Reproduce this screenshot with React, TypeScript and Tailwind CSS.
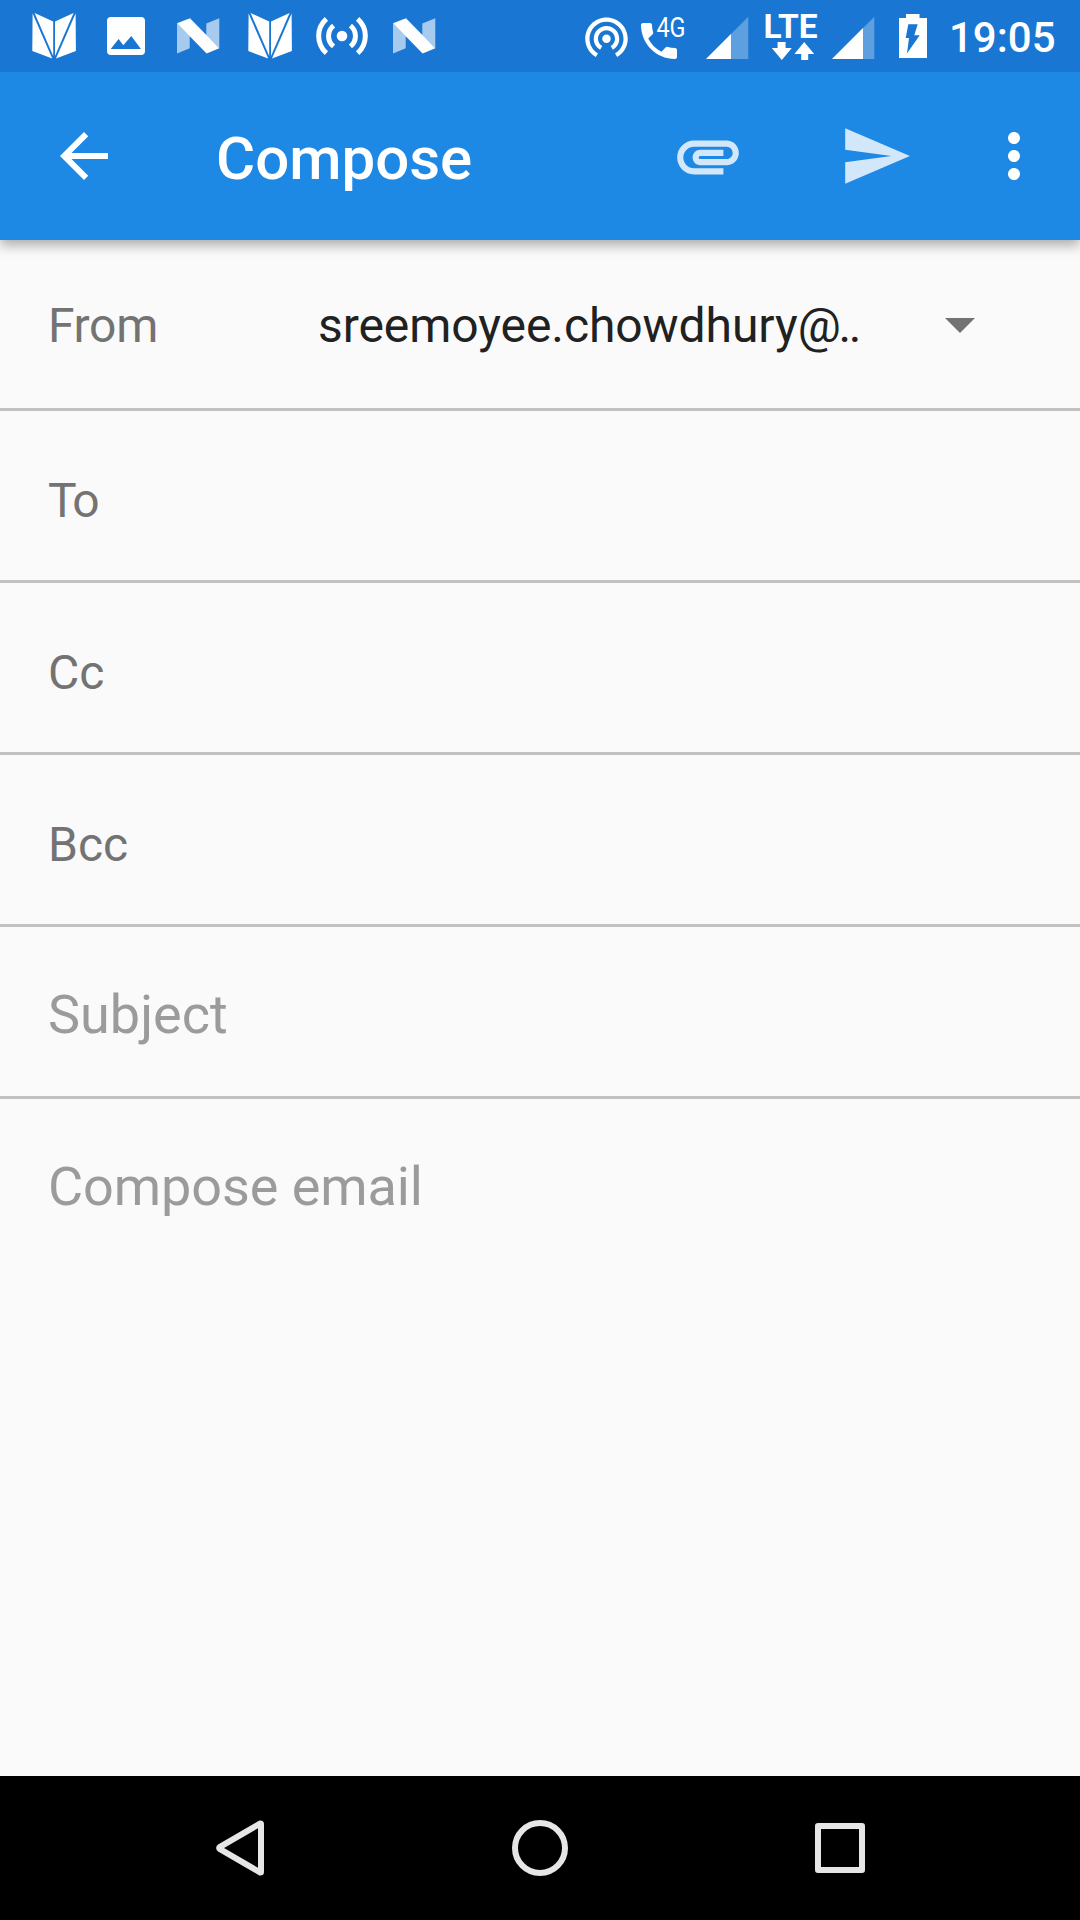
import type { ReactNode } from 'react';

function BookIcon() {
  return (
    <svg className="w-[72px] h-[72px]" viewBox="0 0 72 72" fill="white">
      <path d="M14.6 13.6 34.2 58.6 14.3 51z" />
      <path d="M16.6 13 35.2 21.4V56z" />
      <path d="M57.6 13.6 38 58.6 57.9 51z" />
      <path d="M55.6 13 37 21.4V56z" />
    </svg>
  );
}

function PictureIcon() {
  return (
    <svg className="w-[72px] h-[72px]" viewBox="0 0 72 72">
      <rect x="17" y="17" width="38" height="38" rx="4" fill="white" />
      <path d="M20.7 49 28.6 39 33.3 45.3 41.3 36 50.9 49z" fill="#1976d2" />
    </svg>
  );
}

function NougatIcon() {
  return (
    <svg className="w-[72px] h-[72px]" viewBox="0 0 72 72" fill="white">
      <path d="M15 23.3 27.7 36V48.3L15 53.5zM44.3 23.6 57.3 18.2V48.3L44.3 35.5z" opacity=".62" />
      <path d="M15 23.3 28 18.2 57.3 48.3 44.6 53.5z" />
    </svg>
  );
}

function BroadcastIcon() {
  return (
    <svg className="w-[72px] h-[72px]" viewBox="0 0 72 72" fill="none" stroke="white" strokeWidth="5">
      <circle cx="36" cy="36" r="5.3" fill="white" stroke="none" />
      <path d="M27.6 25.6a13.2 13.2 0 0 0 0 20.8M44.4 25.6a13.2 13.2 0 0 1 0 20.8" />
      <path d="M20.4 18.8a23 23 0 0 0 0 34.4M51.6 18.8a23 23 0 0 1 0 34.4" />
    </svg>
  );
}

function HotspotIcon() {
  return (
    <svg className="w-[51px] h-[51px] shrink-0" viewBox="0 0 24 24" fill="white">
      <path d="M12 11c-1.1 0-2 .9-2 2s.9 2 2 2 2-.9 2-2-.9-2-2-2zm6 2c0-3.31-2.69-6-6-6s-6 2.69-6 6c0 2.22 1.21 4.15 3 5.19l1-1.74c-1.19-.7-2-1.97-2-3.45 0-2.21 1.79-4 4-4s4 1.79 4 4c0 1.48-.81 2.75-2 3.45l1 1.74c1.79-1.04 3-2.97 3-5.19zM12 3C6.48 3 2 7.48 2 13c0 3.7 2.01 6.92 4.99 8.65l1-1.73C5.61 18.53 4 15.96 4 13c0-4.42 3.58-8 8-8s8 3.58 8 8c0 2.96-1.61 5.53-4 6.92l1 1.73c2.99-1.73 5-4.95 5-8.65 0-5.52-4.48-10-10-10z" />
    </svg>
  );
}

function Call4GIcon() {
  return (
    <svg className="w-[60px] h-[72px] shrink-0" viewBox="0 0 60 72" fill="white">
      <path
        transform="translate(3 17) scale(2)"
        d="M6.62 10.79c1.44 2.83 3.76 5.14 6.59 6.59l2.2-2.2c.27-.27.67-.36 1.02-.24 1.12.37 2.33.57 3.57.57.55 0 1 .45 1 1V20c0 .55-.45 1-1 1-9.39 0-17-7.61-17-17 0-.55.45-1 1-1h3.5c.55 0 1 .45 1 1 0 1.25.2 2.45.57 3.57.11.35.03.74-.25 1.02l-2.2 2.2z"
      />
      <text transform="translate(24.4 36.7) scale(.82 1)" fontSize="28.5" className="font-[Roboto,sans-serif]">
        4G
      </text>
    </svg>
  );
}

function SignalIcon({ level }: { level: number }) {
  return (
    <svg className="w-[43px] h-[72px]" viewBox="0 0 43 72" fill="white">
      <path d="M0 59 42.3 16.7V59z" opacity=".3" />
      <path d={`M0 59 ${level} ${59 - level}V59z`} />
    </svg>
  );
}

function LteIcon() {
  return (
    <svg className="w-[54px] h-[72px]" viewBox="0 0 54 72" fill="white">
      <text
        x="-1.5"
        y="38"
        fontSize="32.5"
        fontWeight="700"
        textLength="54"
        lengthAdjust="spacingAndGlyphs"
        className="font-[Roboto,sans-serif]"
      >
        LTE
      </text>
      <path d="M12.6 42h8v6h6.2L16.8 60 6.8 48h5.8zM39.2 42l10 12h-6v6h-7v-6h-6.8z" />
    </svg>
  );
}

function BatteryIcon() {
  return (
    <svg className="w-[28px] h-[72px]" viewBox="0 0 28 72">
      <path d="M7 14h13.5v4H28v40H0V18h7z" fill="white" />
      <path d="M9.3 24.3h9.4l-3.4 11h5.4L8 53.5 10 38H6.7z" fill="#1976d2" />
    </svg>
  );
}

function StatusBar() {
  return (
    <div className="relative z-10 flex h-[72px] bg-[#1976d2] items-center justify-between pl-[18px] pr-[24px]">
      <div className="flex">
        <BookIcon />
        <PictureIcon />
        <NougatIcon />
        <BookIcon />
        <BroadcastIcon />
        <NougatIcon />
      </div>
      <div className="flex w-[475px] shrink-0 items-center whitespace-nowrap">
        <HotspotIcon />
        <Call4GIcon />
        <div className="ml-[13.5px] shrink-0"><SignalIcon level={25} /></div>
        <div className="ml-[16px] shrink-0"><LteIcon /></div>
        <div className="ml-[13px] shrink-0"><SignalIcon level={31} /></div>
        <div className="ml-[24.5px] shrink-0"><BatteryIcon /></div>
        <span className="ml-[22px] mt-[3px] text-[42px] leading-[48px] font-medium text-white">19:05</span>
      </div>
    </div>
  );
}

function AppBar() {
  return (
    <header className="relative flex h-[168px] items-center bg-[#1e88e5] shadow-[0_5px_12px_rgba(0,0,0,0.33)]">
      <svg className="ml-[48px] w-[72px] h-[72px]" viewBox="0 0 24 24" fill="white">
        <path d="M20 11H7.83l5.59-5.59L12 4l-8 8 8 8 1.41-1.41L7.83 13H20v-2z" />
      </svg>
      <h1 className="ml-[96px] mt-[6px] w-[455px] text-[60px] leading-[70px] font-medium text-white">Compose</h1>
      <svg className="w-[74px] h-[74px] opacity-80" viewBox="0 0 24 24" fill="white">
        <path d="M2 12.5C2 9.46 4.46 7 7.5 7H18c2.21 0 4 1.79 4 4s-1.79 4-4 4H9.5C8.12 15 7 13.88 7 12.5S8.12 10 9.5 10H17v2H9.41c-.55 0-.55 1 0 1H18c1.1 0 2-.9 2-2s-.9-2-2-2H7.5C5.57 9 4 10.57 4 12.5S5.57 16 7.5 16H17v2H7.5C4.46 18 2 15.54 2 12.5z" />
      </svg>
      <svg className="ml-[94px] w-[74px] h-[74px] opacity-80" viewBox="0 0 24 24" fill="white">
        <path d="M2.01 21L23 12 2.01 3 2 10l15 2-15 2z" />
      </svg>
      <svg className="ml-[65px] w-[72px] h-[72px]" viewBox="0 0 24 24" fill="white">
        <path d="M12 8c1.1 0 2-.9 2-2s-.9-2-2-2-2 .9-2 2 .9 2 2 2zm0 2c-1.1 0-2 .9-2 2s.9 2 2 2 2-.9 2-2-.9-2-2-2zm0 6c-1.1 0-2 .9-2 2s.9 2 2 2 2-.9 2-2-.9-2-2-2z" />
      </svg>
    </header>
  );
}

function Row({ children }: { children: ReactNode }) {
  return (
    <div className="flex h-[172px] items-center border-b-3 border-[#c1c1c1] pl-[48px] pt-[10px] text-[48px] leading-[56px] text-[#737373]">
      {children}
    </div>
  );
}

export default function App() {
  return (
    <div className="flex h-[1920px] w-[1080px] flex-col overflow-hidden bg-[#fafafa] font-[Roboto,sans-serif]">
      <StatusBar />
      <AppBar />
      <main className="flex-1">
        <div className="flex h-[171px] items-center border-b-3 border-[#c1c1c1] pl-[48px] text-[48px] leading-[56px]">
          <span className="mt-[3px] w-[270px] tracking-[-0.3px] text-[#737373]">From</span>
          <span className="mt-[3px] w-[627px] tracking-[-0.07px] text-[#212121]">
            sreemoyee.chowdhury@<span className="-ml-[2.2px] tracking-[-2.3px]">..</span>
          </span>
          <svg className="mt-[3px] h-[15px] w-[30px]" viewBox="0 0 30 15" fill="#737373">
            <path d="M0 0h30L15 15z" />
          </svg>
        </div>
        <Row>
          <span className="tracking-[-2px]">To</span>
        </Row>
        <Row>Cc</Row>
        <Row>Bcc</Row>
        <div className="flex h-[172px] items-center border-b-3 border-[#c1c1c1] pl-[48px] pt-[6px] text-[54px] leading-[64px] text-[#9b9b9b]">
          Subject
        </div>
        <div className="flex h-[169px] items-center pl-[48px] pt-[6px] text-[54px] leading-[64px] tracking-[-0.08px] text-[#9b9b9b]">
          Compose email
        </div>
      </main>
      <nav className="flex h-[144px] items-center justify-center gap-[228px] bg-black">
        <svg className="h-[72px] w-[72px]" viewBox="0 0 72 72" fill="none" stroke="#e6e6e6" strokeWidth="6" strokeLinejoin="round">
          <path d="M56.4 11.4 16 34.8q-1.8 1.2 0 2.4L56.4 60.6q.6 0 .6-.6V12q0-.6-.6-.6z" />
        </svg>
        <svg className="h-[72px] w-[72px]" viewBox="0 0 72 72" fill="none" stroke="#e6e6e6" strokeWidth="6">
          <circle cx="36" cy="36" r="25" />
        </svg>
        <svg className="h-[72px] w-[72px]" viewBox="0 0 72 72" fill="none" stroke="#e6e6e6" strokeWidth="6" strokeLinejoin="round">
          <rect x="14" y="14" width="44" height="44" />
        </svg>
      </nav>
    </div>
  );
}
